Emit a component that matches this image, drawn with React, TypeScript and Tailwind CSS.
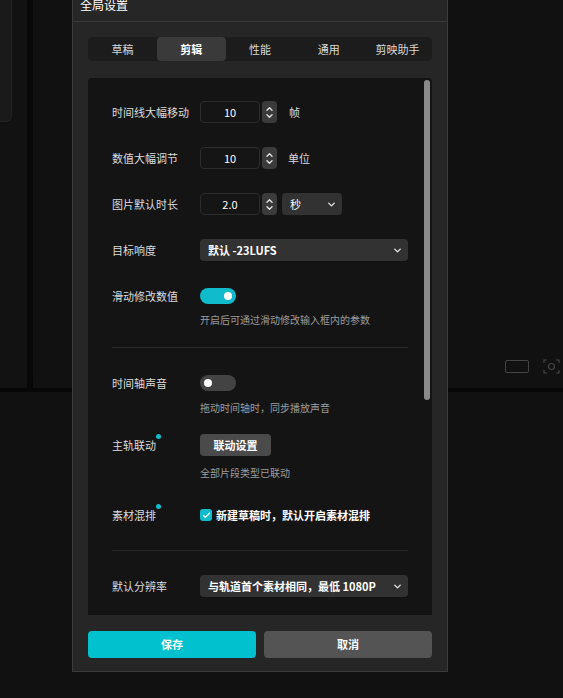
import { Check, ChevronDown } from 'lucide-react'

const font = "font-['Noto_Sans_CJK_SC','Noto_Sans',sans-serif]"

function Stepper() {
  return (
    <div className="flex h-[22px] w-[15px] flex-col items-center justify-center gap-[3px] rounded-[4px] bg-[#3b3b3b]">
      <svg width="7" height="4" viewBox="0 0 7 4" fill="none">
        <path d="M1 3.2L3.5 0.8L6 3.2" stroke="#e6e6e6" strokeWidth="1.3" strokeLinecap="round" strokeLinejoin="round" />
      </svg>
      <svg width="7" height="4" viewBox="0 0 7 4" fill="none">
        <path d="M1 0.8L3.5 3.2L6 0.8" stroke="#e6e6e6" strokeWidth="1.3" strokeLinecap="round" strokeLinejoin="round" />
      </svg>
    </div>
  )
}

function NumberField({ value }: { value: string }) {
  return (
    <div className="flex items-center gap-[2px]">
      <div className="flex h-[22px] w-[60px] items-center justify-center rounded-[4px] border border-[#2c2c2c] bg-[#151515] text-[11px] text-white">
        {value}
      </div>
      <Stepper />
    </div>
  )
}

function Select({ text, width, bold = false }: { text: string; width: string; bold?: boolean }) {
  return (
    <div
      className={`flex h-[22px] ${width} items-center justify-between rounded-[4px] bg-[#323232] pl-[8px] pr-[5px] text-[11px] text-white ${bold ? 'font-bold' : ''}`}
    >
      <span>{text}</span>
      <ChevronDown size={11} strokeWidth={3} color="#e6e6e6" />
    </div>
  )
}

function Toggle({ on }: { on: boolean }) {
  return (
    <div
      className={`flex h-[16px] w-[36px] items-center rounded-full px-[4px] ${on ? 'justify-end bg-[#10bccb]' : 'justify-start bg-[#434343]'}`}
    >
      <div className="h-[8px] w-[8px] rounded-full bg-white" />
    </div>
  )
}

function Label({ text, dot = false }: { text: string; dot?: boolean }) {
  return (
    <div className="w-[88px] shrink-0 text-[11px] text-[#dcdcdc]">
      <span className="relative">
        {text}
        {dot && <span className="absolute -right-[5px] -top-[3px] h-[5px] w-[5px] rounded-full bg-[#10bccb]" />}
      </span>
    </div>
  )
}

function Row({ className = '', children }: { className?: string; children: React.ReactNode }) {
  return <div className={`flex h-[22px] items-center ${className}`}>{children}</div>
}

function Hint({ text, className = '' }: { text: string; className?: string }) {
  return <div className={`pl-[88px] text-[10px] leading-[14px] text-[#9c9c9c] ${className}`}>{text}</div>
}

const tabs = ['草稿', '剪辑', '性能', '通用', '剪映助手']

export default function App() {
  return (
    <div className={`relative h-[698px] w-[563px] overflow-hidden bg-[#111111] ${font}`}>
      {/* editor backdrop */}
      <div className="flex h-[388px]">
        <div className="w-[27px] rounded-br-[6px] bg-[#121212]">
          <div className="h-[122px] w-[12px] rounded-br-[6px] border-b border-r border-[#222] bg-[#1a1a1a]" />
        </div>
        <div className="w-[6px] bg-[#070707]" />
        <div className="flex flex-1 items-end justify-end rounded-bl-[6px] bg-[#111111] pb-[14px] pr-[3px]">
          <div className="flex items-center gap-[14px]">
            <div className="h-[13px] w-[24px] rounded-[2px] border border-[#454545]" />
            <svg width="17" height="15" viewBox="0 0 17 15" fill="none" stroke="#454545" strokeWidth="1.2">
              <path d="M1 4V1H4M13 1H16V4M16 11V14H13M4 14H1V11" />
              <circle cx="8.5" cy="7.5" r="3" />
            </svg>
          </div>
        </div>
      </div>
      <div className="h-[4px] bg-[#070707]" />

      {/* settings dialog */}
      <div className="absolute left-[72px] top-[-12px] flex w-[376px] flex-col border border-[#3a3a3a] bg-[#262626]">
        <div className="flex h-[33px] items-center border-b border-[#3a3a3a] px-[7px] text-[12px] text-white">全局设置</div>

        <div className="flex flex-col px-[15px] pb-[13px] pt-[15px]">
          <div className="flex h-[24px] rounded-[4px] bg-[#1c1c1c]">
            {tabs.map((t, i) => (
              <div
                key={t}
                className={`flex w-[69px] items-center justify-center rounded-[4px] text-[11px] ${i === 1 ? 'bg-[#3a3a3a] font-bold text-white' : 'text-[#d8d8d8]'}`}
              >
                {t}
              </div>
            ))}
          </div>

          <div className="relative mt-[17px] h-[537px] overflow-hidden rounded-t-[4px] bg-[#141414] px-[24px] pt-[23px]">
            <div className="absolute right-[2px] top-[2px] h-[320px] w-[6px] rounded-full bg-[#8a8a8a]" />

            <Row>
              <Label text="时间线大幅移动" />
              <NumberField value="10" />
              <span className="ml-[12px] text-[11px] text-[#dcdcdc]">帧</span>
            </Row>
            <Row className="mt-[24px]">
              <Label text="数值大幅调节" />
              <NumberField value="10" />
              <span className="ml-[11px] text-[11px] text-[#dcdcdc]">单位</span>
            </Row>
            <Row className="mt-[24px]">
              <Label text="图片默认时长" />
              <NumberField value="2.0" />
              <div className="ml-[5px]">
                <Select text="秒" width="w-[60px]" />
              </div>
            </Row>
            <Row className="mt-[24px]">
              <Label text="目标响度" />
              <Select text="默认 -23LUFS" width="w-[208px]" bold />
            </Row>

            <Row className="mt-[24px]">
              <Label text="滑动修改数值" />
              <Toggle on />
            </Row>
            <Hint text="开启后可通过滑动修改输入框内的参数" className="mt-[6px]" />
            <div className="mt-[20px] h-px bg-[#282828]" />

            <Row className="mt-[24px]">
              <Label text="时间轴声音" />
              <Toggle on={false} />
            </Row>
            <Hint text="拖动时间轴时，同步播放声音" className="mt-[7px]" />

            <Row className="mt-[19px]">
              <Label text="主轨联动" dot />
              <div className="flex h-[22px] w-[71px] items-center justify-center rounded-[4px] bg-[#4a4a4a] text-[11px] font-bold text-white">
                联动设置
              </div>
            </Row>
            <Hint text="全部片段类型已联动" className="mt-[10px]" />

            <Row className="mt-[24px]">
              <Label text="素材混排" dot />
              <div className="flex h-[12px] w-[12px] items-center justify-center rounded-[3px] bg-[#10bccb]">
                <Check size={9} strokeWidth={3.5} color="#ffffff" />
              </div>
              <span className="ml-[4px] text-[11px] font-bold text-white">新建草稿时，默认开启素材混排</span>
            </Row>
            <div className="mt-[24px] h-px bg-[#282828]" />

            <Row className="mt-[24px]">
              <Label text="默认分辨率" />
              <Select text="与轨道首个素材相同，最低 1080P" width="w-[208px]" bold />
            </Row>
          </div>

          <div className="mt-[16px] flex gap-[8px]">
            <button className="flex h-[27px] flex-1 items-center justify-center rounded-[4px] bg-[#00c1cd] text-[11px] font-bold text-white">
              保存
            </button>
            <button className="flex h-[27px] flex-1 items-center justify-center rounded-[4px] bg-[#545454] text-[11px] font-bold text-white">
              取消
            </button>
          </div>
        </div>
      </div>
    </div>
  )
}
